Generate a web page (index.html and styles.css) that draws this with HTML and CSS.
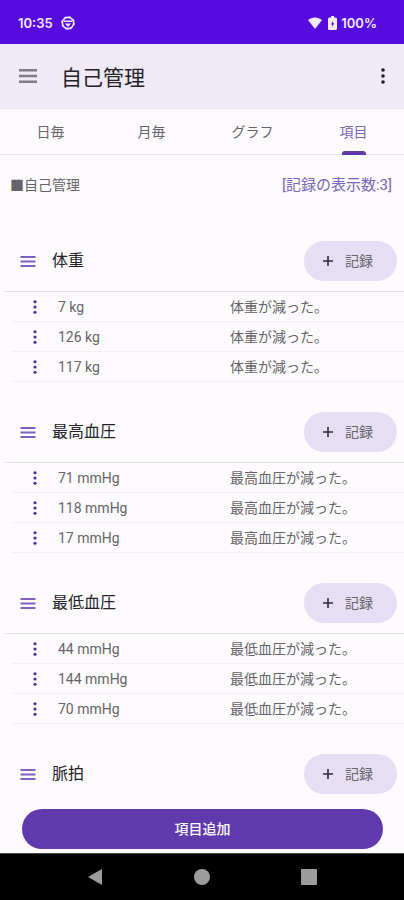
FILE: index.html
```html
<!DOCTYPE html>
<html lang="ja">
<head>
<meta charset="utf-8">
<meta name="viewport" content="width=device-width, initial-scale=1">
<title>自己管理</title>
<link rel="stylesheet" href="styles.css">
</head>
<body>
<svg class="defs" aria-hidden="true">
  <symbol id="menu" viewBox="0 0 18 14"><path d="M0 0h18v2.600H0zM0 5.700h18v2.600H0zM0 11.400h18V14H0z"/></symbol>
  <symbol id="drag" viewBox="0 0 15 11"><path d="M0 0h15v2H0zM0 4.500h15v2H0zM0 9h15v2H0z"/></symbol>
  <symbol id="more" viewBox="0 0 4 16"><circle cx="2" cy="2" r="1.8"/><circle cx="2" cy="8" r="1.8"/><circle cx="2" cy="14" r="1.8"/></symbol>
  <symbol id="plus" viewBox="0 0 12 12"><path d="M5.2 1h1.6v4.2H11v1.6H6.800V11H5.200V6.800H1V5.200h4.200z"/></symbol>
</svg>

<div class="status">
  <span class="clock">10:35</span>
  <svg class="alert" viewBox="0 0 14 14"><circle cx="7" cy="7" r="5.600" fill="none" stroke="currentColor" stroke-width="1.600" /><circle cx="7" cy="7" r="6.400" fill="none" stroke="currentColor" stroke-width="1" stroke-dasharray="2.500 2.500"/><path d="M3 4.500h8v1.500H3zM4 7.500h6L7 11z" fill="currentColor"/></svg>
  <span class="system">
    <svg class="wifi" viewBox="0 0 14 12"><path d="M0 3C4-.5 10-.5 14 3L7 12z"/></svg>
    <svg class="battery" viewBox="0 0 9 14"><path fill-rule="evenodd" d="M3 0h3v1.500h1.500Q9 1.500 9 3v9.500Q9 14 7.500 14h-6Q0 14 0 12.500V3q0-1.500 1.500-1.500H3zM5 5L3 8.500h1.300V11l1.900-3.700H5z"/></svg>
    <span>100%</span>
  </span>
</div>

<header class="appbar">
  <button class="icon-button" aria-label="メニュー"><svg class="nav-icon"><use href="#menu"/></svg></button>
  <h1>自己管理</h1>
  <button class="icon-button" aria-label="その他"><svg class="more-icon"><use href="#more"/></svg></button>
</header>

<nav class="tabs">
  <a href="#day">日毎</a>
  <a href="#month">月毎</a>
  <a href="#graph">グラフ</a>
  <a href="#items" class="active" aria-current="page">項目</a>
</nav>

<main>
  <div class="summary">
    <span>■自己管理</span>
    <button class="count">[記録の表示数:3]</button>
  </div>

  <section>
    <div class="head">
      <button class="icon-button" aria-label="並べ替え"><svg class="drag-icon"><use href="#drag"/></svg></button>
      <h2>体重</h2>
      <button class="record"><svg><use href="#plus"/></svg>記録</button>
    </div>
    <ul>
      <li><button class="icon-button" aria-label="編集"><svg><use href="#more"/></svg></button><span>7 kg</span><span>体重が減った。</span></li>
      <li><button class="icon-button" aria-label="編集"><svg><use href="#more"/></svg></button><span>126 kg</span><span>体重が減った。</span></li>
      <li><button class="icon-button" aria-label="編集"><svg><use href="#more"/></svg></button><span>117 kg</span><span>体重が減った。</span></li>
    </ul>
  </section>

  <section>
    <div class="head">
      <button class="icon-button" aria-label="並べ替え"><svg class="drag-icon"><use href="#drag"/></svg></button>
      <h2>最高血圧</h2>
      <button class="record"><svg><use href="#plus"/></svg>記録</button>
    </div>
    <ul>
      <li><button class="icon-button" aria-label="編集"><svg><use href="#more"/></svg></button><span>71 mmHg</span><span>最高血圧が減った。</span></li>
      <li><button class="icon-button" aria-label="編集"><svg><use href="#more"/></svg></button><span>118 mmHg</span><span>最高血圧が減った。</span></li>
      <li><button class="icon-button" aria-label="編集"><svg><use href="#more"/></svg></button><span>17 mmHg</span><span>最高血圧が減った。</span></li>
    </ul>
  </section>

  <section>
    <div class="head">
      <button class="icon-button" aria-label="並べ替え"><svg class="drag-icon"><use href="#drag"/></svg></button>
      <h2>最低血圧</h2>
      <button class="record"><svg><use href="#plus"/></svg>記録</button>
    </div>
    <ul>
      <li><button class="icon-button" aria-label="編集"><svg><use href="#more"/></svg></button><span>44 mmHg</span><span>最低血圧が減った。</span></li>
      <li><button class="icon-button" aria-label="編集"><svg><use href="#more"/></svg></button><span>144 mmHg</span><span>最低血圧が減った。</span></li>
      <li><button class="icon-button" aria-label="編集"><svg><use href="#more"/></svg></button><span>70 mmHg</span><span>最低血圧が減った。</span></li>
    </ul>
  </section>

  <section>
    <div class="head">
      <button class="icon-button" aria-label="並べ替え"><svg class="drag-icon"><use href="#drag"/></svg></button>
      <h2>脈拍</h2>
      <button class="record"><svg><use href="#plus"/></svg>記録</button>
    </div>
  </section>
</main>

<footer class="actions"><button class="add">項目追加</button></footer>

<div class="system-nav">
  <button class="icon-button" aria-label="戻る"><svg viewBox="0 0 16 16"><path d="M1 8L15 0v16z"/></svg></button>
  <button class="icon-button" aria-label="ホーム"><svg viewBox="0 0 16 16"><circle cx="8" cy="8" r="8"/></svg></button>
  <button class="icon-button" aria-label="履歴"><svg viewBox="0 0 16 16"><rect width="16" height="16" rx="1"/></svg></button>
</div>
</body>
</html>
```
FILE: styles.css
```css
* { box-sizing: border-box; }

body {
  margin: 0;
  height: 100vh;
  display: flex;
  flex-direction: column;
  background: #fdfbfe;
  color: #66646a;
  font: 14px/20px Roboto, "Noto Sans CJK JP", sans-serif;
}

h1, h2, ul { margin: 0; padding: 0; font-weight: 400; }
ul { list-style: none; }
a { color: inherit; text-decoration: none; }
button { font: inherit; color: inherit; border: 0; padding: 0; background: none; }
svg { display: block; fill: currentColor; }
.defs { display: none; }
.icon-button { display: flex; align-items: center; justify-content: center; }

.status {
  flex: none;
  height: 44px;
  padding: 2px 27px 0 18px;
  display: flex;
  align-items: center;
  gap: 8px;
  background: #560bdf;
  color: #f2ebff;
  font: 600 13px/20px Inter, Roboto, sans-serif;
}
.alert { width: 14px; height: 14px; }
.system { margin-left: auto; display: flex; align-items: center; gap: 4px; }
.wifi { width: 14px; height: 12px; }
.battery { width: 9px; height: 14px; margin-left: 2px; }

.appbar {
  flex: none;
  height: 65px;
  padding: 0 19px;
  display: flex;
  align-items: center;
  background: #f0eaf6;
  border-bottom: 1px solid #e9e4ee;
  color: #242228;
}
.appbar h1 { flex: 1; margin-left: 24px; padding-top: 3px; font-size: 21px; line-height: 28px; }
.nav-icon { width: 18px; height: 14px; color: #817d86; }
.more-icon { width: 4px; height: 16px; }

.tabs {
  flex: none;
  height: 46px;
  display: grid;
  grid-template-columns: repeat(4, 1fr);
  border-bottom: 1px solid #e8e5ea;
}
.tabs a { display: flex; align-items: center; justify-content: center; position: relative; }
.tabs .active { color: #7a66ba; }
.active::after {
  content: "";
  position: absolute;
  bottom: -1px;
  width: 24px;
  height: 4px;
  border-radius: 3px 3px 0 0;
  background: #6039ac;
}

main { flex: 1; min-height: 0; overflow-y: auto; scrollbar-width: none; }

.summary {
  height: 60px;
  margin-bottom: 15px;
  padding: 0 12px 0 10px;
  display: flex;
  align-items: center;
  justify-content: space-between;
}
.count { color: #7a66ba; font-size: 15px; }

section { margin-bottom: 19px; padding-left: 5px; }
.head {
  height: 62px;
  padding: 11px 7px 10px 15px;
  display: flex;
  align-items: center;
  border-bottom: 1px solid #e5e2e8;
}
.head h2 { flex: 1; margin-left: 16px; color: #242228; font-size: 16px; }
.drag-icon { width: 16px; height: 11px; color: #7f62c0; }
.record {
  height: 40px;
  padding: 0 24px 0 18px;
  display: flex;
  align-items: center;
  gap: 11px;
  border-radius: 20px;
  background: #e6def5;
}
.record svg { width: 12px; height: 12px; color: #302b3c; }

li {
  height: 30px;
  margin-left: 7px;
  padding-left: 16px;
  display: grid;
  grid-template-columns: 30px 1fr 174px;
  align-items: center;
  border-bottom: 1px solid #f3f0f5;
}
li .icon-button { justify-content: flex-start; padding-left: 5px; }
li svg { width: 4px; height: 14px; color: #4d2aa5; }

.actions { flex: none; padding: 7px 21px 4px 22px; }
.add {
  width: 100%;
  height: 40px;
  border-radius: 20px;
  background: #6039ac;
  color: #fff;
  font-weight: 500;
}

.system-nav {
  flex: none;
  height: 47px;
  display: flex;
  align-items: center;
  justify-content: center;
  gap: 91px;
  background: #000;
  color: #9c9c9c;
  border-top: 1px solid #4a4a4a;
}
.system-nav svg { width: 16px; height: 16px; }
```
